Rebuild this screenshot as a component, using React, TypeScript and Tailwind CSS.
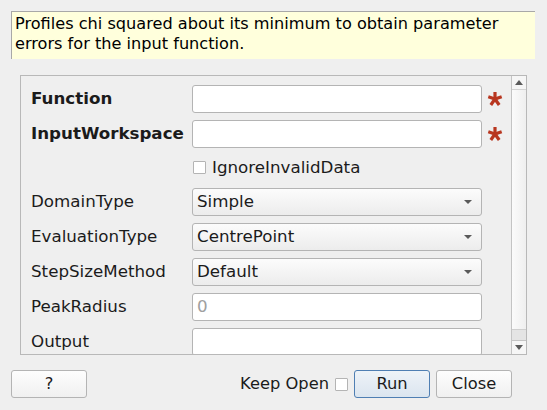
import React from "react";

type Field = {
  label: string;
  kind: "text" | "combo" | "check";
  value?: string;
  bold?: boolean;
  required?: boolean;
  placeholder?: string;
};

const fields: Field[] = [
  { label: "Function", kind: "text", bold: true, required: true },
  { label: "InputWorkspace", kind: "text", bold: true, required: true },
  { label: "IgnoreInvalidData", kind: "check" },
  { label: "DomainType", kind: "combo", value: "Simple" },
  { label: "EvaluationType", kind: "combo", value: "CentrePoint" },
  { label: "StepSizeMethod", kind: "combo", value: "Default" },
  { label: "PeakRadius", kind: "text", placeholder: "0" },
  { label: "Output", kind: "text" },
];

function Asterisk() {
  return (
    <svg width="16" height="16" viewBox="0 0 16 16" className="ml-[5px]">
      <g stroke="#b8361f" strokeWidth="3.2" strokeLinecap="butt">
        <line x1="8" y1="8" x2="8" y2="1" />
        <line x1="8" y1="8" x2="14.7" y2="5.8" />
        <line x1="8" y1="8" x2="1.3" y2="5.8" />
        <line x1="8" y1="8" x2="12.2" y2="14" />
        <line x1="8" y1="8" x2="3.8" y2="14" />
      </g>
    </svg>
  );
}

function Checkbox() {
  return <span className="inline-block shrink-0 w-[13px] h-[13px] border border-[#b4b4b4] bg-white rounded-[1px]" />;
}

function Row({ f }: { f: Field }) {
  if (f.kind === "check") {
    return (
      <div className="flex items-center h-[26px] shrink-0">
        <div className="w-[161px] shrink-0" />
        <div className="flex items-center gap-[6px] pl-[1px]">
          <Checkbox />
          <span>{f.label}</span>
        </div>
      </div>
    );
  }
  return (
    <div className="flex items-center h-[28px] shrink-0">
      <div className={`w-[161px] shrink-0 ${f.bold ? "font-bold" : ""}`}>{f.label}</div>
      {f.kind === "combo" ? (
        <div className="w-[290px] h-[28px] shrink-0 flex items-center justify-between pl-[4px] pr-[9px] border border-[#b4b4b4] rounded-[3px] bg-gradient-to-b from-[#fcfcfc] to-[#ececec]">
          <span>{f.value}</span>
          <svg width="8" height="5" viewBox="0 0 8 5">
            <path d="M0 0 L8 0 L4 4 Z" fill="#5a5a5a" />
          </svg>
        </div>
      ) : (
        <div className="w-[290px] h-[28px] shrink-0 flex items-center pl-[4px] border border-[#b4b4b4] rounded-[3px] bg-white text-[#a0a0a0]">
          {f.placeholder ?? ""}
        </div>
      )}
      {f.required && <Asterisk />}
    </div>
  );
}

function Button({ label, primary }: { label: string; primary?: boolean }) {
  return (
    <div
      className={`w-[76px] h-[28px] flex items-center justify-center rounded-[3px] border ${
        primary
          ? "border-[#4f7fb3] bg-gradient-to-b from-[#eef3f8] to-[#dbe5ef]"
          : "border-[#b4b4b4] bg-gradient-to-b from-[#fdfdfd] to-[#f0f0f0]"
      }`}
    >
      {label}
    </div>
  );
}

export default function App() {
  return (
    <div
      className="w-[547px] h-[410px] bg-[#efefef] text-[16px] text-[#1b1b1b] overflow-hidden"
      style={{ fontFamily: '"DejaVu Sans", sans-serif' }}
    >
      <div className="ml-[11px] mt-[11px] w-[524px] h-[48px] border-l border-t border-[#a8a8a8] bg-[#ffffdc] pl-[3px] pt-[2px] leading-[20px] text-[16.15px] text-black">
        Profiles chi squared about its minimum to obtain parameter errors for the input function.
      </div>

      <div className="ml-[20px] mt-[16px] w-[507px] h-[280px] border border-[#b8b8b8] flex overflow-hidden">
        <div className="flex-1 flex flex-col gap-[7px] pt-[9px] pl-[10px] overflow-hidden text-[16.7px]">
          {fields.map((f) => (
            <Row key={f.label} f={f} />
          ))}
        </div>
        <div className="w-[15px] border-l border-[#c4c4c4] flex flex-col bg-[#e4e4e4]">
          <div className="h-[14px] flex items-center justify-center bg-[#f6f6f6] border-b border-[#d4d4d4]">
            <svg width="8" height="5" viewBox="0 0 8 5">
              <path d="M0 5 L8 5 L4 0 Z" fill="#5a5a5a" />
            </svg>
          </div>
          <div className="h-[240px] bg-gradient-to-r from-[#fbfbfb] to-[#efefef] border-b border-[#cfcfcf]" />
          <div className="flex-1" />
          <div className="h-[14px] flex items-center justify-center bg-[#f6f6f6] border-t border-[#c4c4c4]">
            <svg width="8" height="5" viewBox="0 0 8 5">
              <path d="M0 0 L8 0 L4 5 Z" fill="#5a5a5a" />
            </svg>
          </div>
        </div>
      </div>

      <div className="flex items-center mt-[15px] pl-[11px] w-[512px] text-[16.3px]">
        <Button label="?" />
        <div className="flex-1" />
        <span className="mr-[6px]">Keep Open</span>
        <Checkbox />
        <div className="w-[6px]" />
        <Button label="Run" primary />
        <div className="w-[6px]" />
        <Button label="Close" />
      </div>
    </div>
  );
}
